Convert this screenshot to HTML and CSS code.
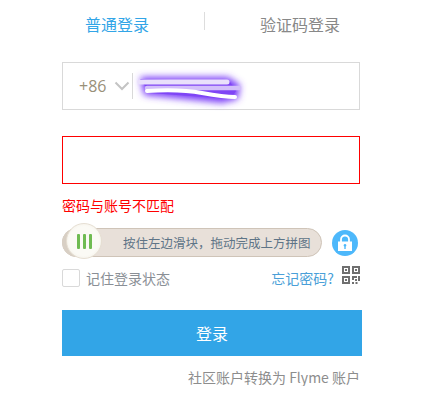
FILE: index.html
```html
<!DOCTYPE html>
<html lang="zh">
<head>
<meta charset="utf-8">
<title>登录</title>
<link rel="stylesheet" href="styles.css">
</head>
<body>
<main class="form">
  <nav class="tabs">
    <a class="tab tab-active">普通登录</a>
    <span class="tab-sep"></span>
    <a class="tab">验证码登录</a>
  </nav>
  <div class="field phone">
    <span class="code">+86</span>
    <svg class="chev" width="16" height="10" viewBox="0 0 16 10"><path d="M1.500 1.500 L8 8 L14.500 1.500" fill="none" stroke="#c4c4c4" stroke-width="2"/></svg>
    <span class="phone-sep"></span>
    <svg class="smudge" width="120" height="50" viewBox="0 0 120 50">
      <defs><filter id="b" x="-20%" y="-60%" width="140%" height="220%"><feGaussianBlur stdDeviation="3.500"/></filter></defs>
      <path d="M10 16 L98 16 L110 24 L108 38 L92 42 L14 34 Z" fill="#7c3cf8" filter="url(#b)"/>
      <path d="M10 18 L100 21 L106 30 L100 38 L20 32 Z" fill="#7f45f5"/>
      <path d="M10 21 L97 21" stroke="#e9e0fb" stroke-width="5" stroke-linecap="round"/>
      <path d="M17 27 L109 27" stroke="#d3bffa" stroke-width="4.500" stroke-linecap="round"/>
      <path d="M17 30 Q50 28 72 32 T105 36" fill="none" stroke="#fff" stroke-width="4" stroke-linecap="round"/>
    </svg>
  </div>
  <div class="field field-error"></div>
  <p class="error">密码与账号不匹配</p>
  <div class="captcha">
    <div class="track">
      <span class="knob-shadow"></span>
      <span class="knob"><i></i><i></i><i></i></span>
      <span class="track-text">按住左边滑块，拖动完成上方拼图</span>
    </div>
    <span class="lock">
      <svg width="16" height="18" viewBox="0 0 16 18"><path d="M4 8V5.500a4 4 0 0 1 8 0V8" fill="none" stroke="#fff" stroke-width="1.800"/><path fill-rule="evenodd" d="M1 7.500h14V17H1Z M8 10a1.400 1.400 0 0 0-.7 2.600V15h1.400v-2.400A1.400 1.400 0 0 0 8 10Z" fill="#fff"/></svg>
    </span>
  </div>
  <div class="options">
    <label class="remember"><span class="check"></span>记住登录状态</label>
    <span class="opt-right">
      <a class="forgot">忘记密码?</a>
      <svg class="qr" width="18" height="18" viewBox="0 0 18 18" fill="#6f6f6f">
        <path fill-rule="evenodd" d="M0 0h8v8H0Z M2 2v4h4V2Z M10 0h8v8h-8Z M12 2v4h4V2Z M0 10h8v8H0Z M2 12v4h4v-4Z"/>
        <path d="M3 3h2v2H3Z M13 3h2v2h-2Z M3 13h2v2H3Z M10 10h5v2h-3v2h-2Z M16 10h2v5h-2Z M13 13h2v2h-2Z M10 16h2v2h-2Z M13.500 16h2v2h-2Z"/>
      </svg>
    </span>
  </div>
  <button class="submit">登录</button>
  <p class="convert">社区账户转换为 Flyme 账户</p>
</main>
</body>
</html>
```
FILE: styles.css
```css
* { box-sizing: border-box; }
html, body { margin: 0; padding: 0; background: #fff; }
body {
  font-family: "Noto Sans CJK SC", "Open Sans", "Liberation Sans", sans-serif;
  color: #888;
  overflow: hidden;
}
.form {
  width: 300px;
  margin-left: 62px;
  display: flex;
  flex-direction: column;
}
.tabs {
  height: 62px;
  display: flex;
  align-items: flex-start;
}
.tab {
  font-size: 16px;
  line-height: 24px;
  margin-top: 12px;
  color: #888;
  white-space: nowrap;
}
.tab-active { color: #32a5e7; margin-left: 23px; }
.tab-sep {
  width: 1px;
  height: 18px;
  background: #ddd;
  margin: 12px 55px 0 55px;
}
.field {
  width: 298px;
  height: 48px;
  border: 1px solid #d9d9d9;
}
.phone {
  display: flex;
  align-items: center;
  padding-left: 16px;
}
.code { font-size: 16px; color: #999079; line-height: 20px; width: 35px; font-family: "Open Sans", sans-serif; }
.chev { flex: none; }
.phone-sep { width: 1px; height: 26px; background: #d9d9d9; margin-left: 2px; flex: none; }
.smudge { flex: none; margin-left: -3px; }
.field-error {
  margin-top: 26px;
  border-color: #f00;
}
.error {
  margin: 12px 0 0;
  font-size: 14px;
  line-height: 18px;
  color: #f00;
}
.captcha {
  margin-top: 14px;
  display: flex;
  align-items: flex-start;
  height: 30px;
}
.track {
  width: 260px;
  height: 29px;
  border-radius: 15px;
  background: #e8e0d9;
  border: 1px solid #cfc4b8;
  position: relative;
  display: flex;
  align-items: center;
  padding-left: 60px;
}
.knob-shadow {
  position: absolute;
  left: -1px;
  top: -1px;
  width: 30px;
  height: 29px;
  border-radius: 50%;
  background: #d8cfc4;
}
.knob {
  position: absolute;
  left: 3px;
  top: -6px;
  width: 36px;
  height: 36px;
  border-radius: 50%;
  background: radial-gradient(circle, #fbfaf5 60%, #efe9de 100%);
  border: 1px solid #e6dfd3;
  display: flex;
  align-items: center;
  justify-content: center;
  gap: 3px;
}
.knob i {
  width: 3px;
  height: 15px;
  background: #6fbb52;
  border-radius: 1px;
}
.track-text {
  font-size: 12.500px;
  color: #5e7487;
  white-space: nowrap;
}
.lock {
  width: 26px;
  height: 26px;
  border-radius: 50%;
  background: #4db8fb;
  margin: 2px 0 0 10px;
  display: flex;
  align-items: center;
  justify-content: center;
}
.options {
  margin-top: 10px;
  height: 20px;
  display: flex;
  align-items: center;
  justify-content: space-between;
  width: 298px;
}
.remember {
  display: flex;
  align-items: center;
  gap: 6px;
  font-size: 14px;
  color: #8a8f96;
}
.check {
  width: 18px;
  height: 18px;
  border: 1px solid #d9d9d9;
  border-radius: 2px;
  background: #fff;
}
.opt-right { display: flex; align-items: center; gap: 8px; }
.forgot { font-size: 14px; color: #4a9fd8; }
.qr { margin-top: -6px; }
.submit {
  margin-top: 22px;
  width: 300px;
  height: 46px;
  border: 0;
  background: #32a5e7;
  color: #fff;
  font: inherit;
  font-size: 16px;
  padding: 0;
}
.convert {
  margin: 12px 2px 0 0;
  text-align: right;
  font-size: 14px;
  line-height: 18px;
  color: #8d8d8d;
}
```
